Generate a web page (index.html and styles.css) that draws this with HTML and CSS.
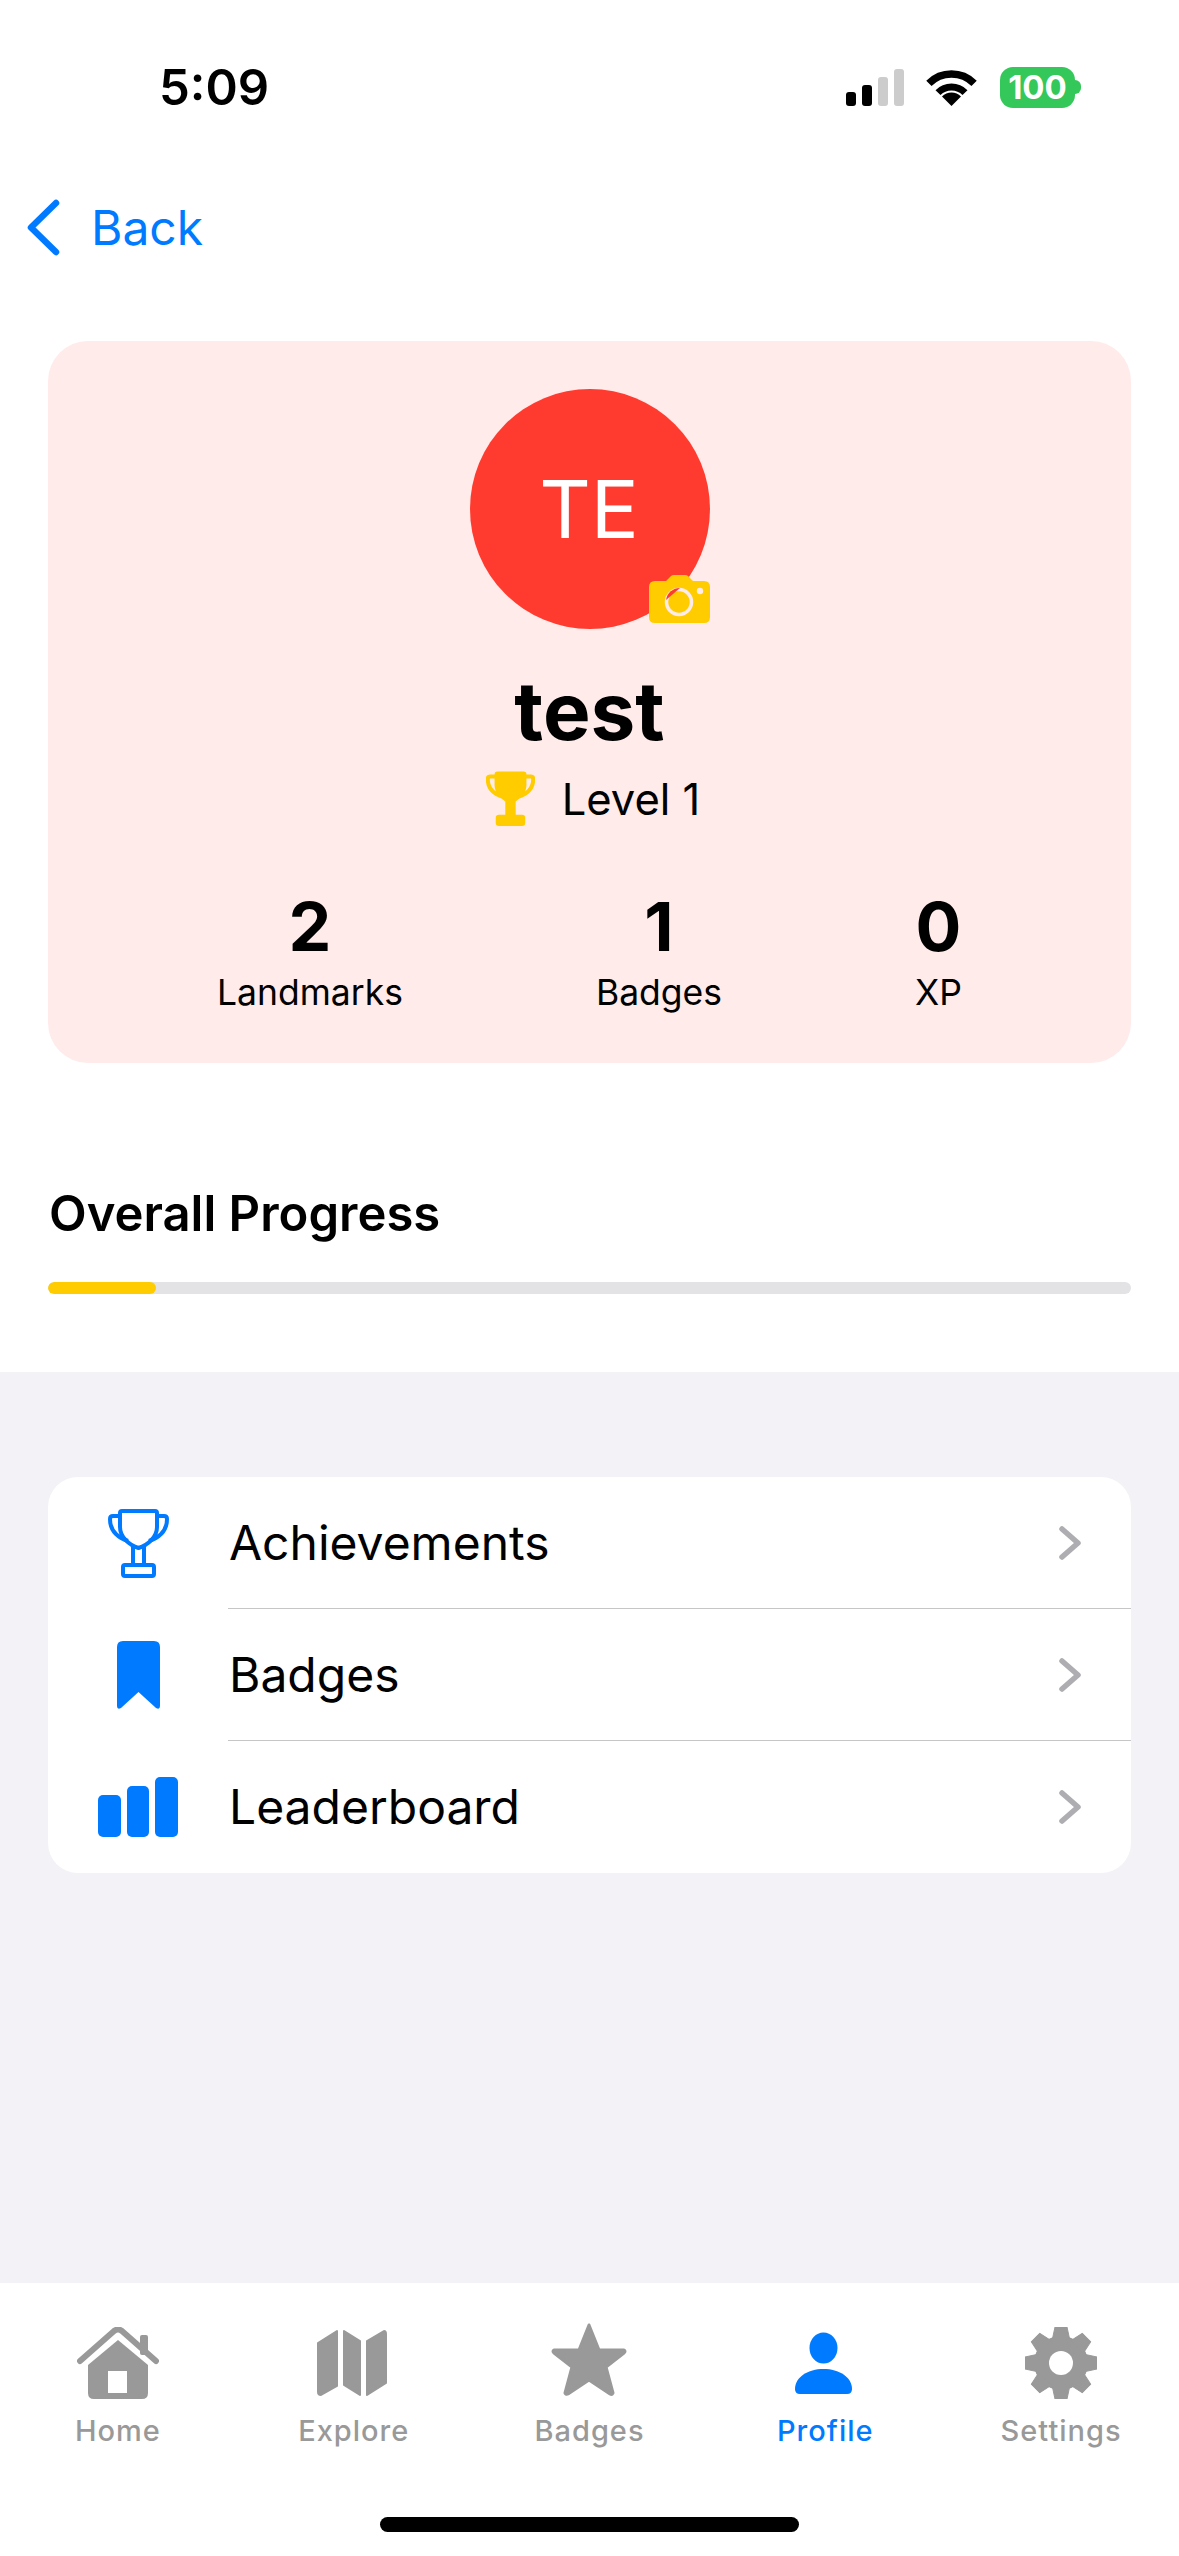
FILE: index.html
```html
<!DOCTYPE html>
<html lang="en">
<head>
  <meta charset="UTF-8" />
  <meta name="viewport" content="width=device-width, initial-scale=1" />
  <title>Profile</title>
  <link rel="stylesheet" href="styles.css">
</head>
<body>

<div class="phone">
  <header class="status-bar">
    <span class="time">5:09</span>
    <div class="status-icons">
      <svg class="signal" width="58" height="37" viewBox="0 0 58 37">
        <rect x="0" y="23" width="10" height="14" rx="3" fill="#000"/>
        <rect x="16" y="16" width="10" height="21" rx="3" fill="#000"/>
        <rect x="32" y="8" width="10" height="29" rx="3" fill="#ccc"/>
        <rect x="48" y="0" width="10" height="37" rx="3" fill="#ccc"/>
      </svg>
      <svg class="wifi" width="51" height="37" viewBox="0 0 51 37">
        <path d="M2.9 14.4A32 32 0 0 1 48.1 14.4" fill="none" stroke="#000" stroke-width="7.5"/>
        <path d="M12 23.6A19 19 0 0 1 39 23.6" fill="none" stroke="#000" stroke-width="7"/>
        <path d="M25.5 37L16 27.5A13.4 13.4 0 0 1 35 27.5Z" fill="#000"/>
      </svg>
      <div class="battery">
        <span class="battery-body">100</span>
        <span class="battery-nub"></span>
      </div>
    </div>
  </header>

  <nav class="nav-bar">
    <svg width="33" height="57" viewBox="0 0 33 57">
      <polyline points="29,4 4,28.5 29,53" fill="none" stroke="#007aff" stroke-width="6.5" stroke-linecap="round" stroke-linejoin="round"/>
    </svg>
    <span class="back-label">Back</span>
  </nav>

  <section class="profile-card">
    <div class="avatar">
      <span class="initials">TE</span>
      <svg class="camera" width="61" height="48" viewBox="0 0 61 48">
        <path d="M6 6H17L22 1Q23 0 25 0H36Q38 0 39 1L44 6H55Q61 6 61 12V42Q61 48 55 48H6Q0 48 0 42V12Q0 6 6 6Z" fill="#ffcc00"/>
        <circle cx="30" cy="27" r="12.5" fill="none" stroke="#ffebea" stroke-width="3.5"/>
        <path d="M17 25A14 14 0 0 1 31 13Z" fill="#ff3b30"/>
        <circle cx="51" cy="16" r="3.200" fill="#ffebea"/>
      </svg>
    </div>
    <h1 class="name">test</h1>
    <div class="level">
      <svg width="49" height="55" viewBox="0 0 61 69">
        <path d="M14 2H47Q49 2 49 4V18C49 28 40 36 30.500 39C21 36 12 28 12 18V4Q12 2 14 2Z" fill="#ffcc00" stroke="#ffcc00" stroke-width="3"/>
        <path d="M12 7H5Q2 7 2 10C2 20 8 28 20 32M49 7H56Q59 7 59 10C59 20 53 28 41 32" fill="none" stroke="#ffcc00" stroke-width="5"/>
        <rect x="24" y="36" width="13" height="22" fill="#ffcc00"/>
        <rect x="12" y="55" width="37" height="14" rx="4" fill="#ffcc00"/>
      </svg>
      <span class="level-label">Level 1</span>
    </div>
    <div class="stats">
      <div class="stat"><span class="stat-value">2</span><span class="stat-label">Landmarks</span></div>
      <div class="stat"><span class="stat-value">1</span><span class="stat-label">Badges</span></div>
      <div class="stat"><span class="stat-value">0</span><span class="stat-label">XP</span></div>
    </div>
  </section>

  <section class="progress">
    <h2 class="progress-title">Overall Progress</h2>
    <div class="progress-track"><div class="progress-fill" style="width:10%"></div></div>
  </section>

  <main class="content">
    <ul class="menu">
      <li class="menu-row">
        <span class="menu-icon">
          <svg width="61" height="69" viewBox="0 0 61 69">
            <g fill="none" stroke="#007aff" stroke-width="4">
              <path d="M14 2H47Q49 2 49 4V18C49 28 40 36 30.500 39C21 36 12 28 12 18V4Q12 2 14 2Z"/>
              <path d="M12 7H5Q2 7 2 10C2 20 8 28 20 32M49 7H56Q59 7 59 10C59 20 53 28 41 32"/>
              <path d="M25 38V56M36 38V56"/>
              <rect x="15" y="56" width="31" height="11" rx="2"/>
            </g>
          </svg>
        </span>
        <span class="menu-label">Achievements</span>
        <svg class="menu-arrow" width="25" height="34" viewBox="0 0 25 34"><polyline points="4,3 20,17 4,31" fill="none" stroke="#aeaeb2" stroke-width="5.500" stroke-linecap="round" stroke-linejoin="round"/></svg>
      </li>
      <li class="menu-row">
        <span class="menu-icon">
          <svg width="43" height="68" viewBox="0 0 43 68">
            <path d="M6 0H37Q43 0 43 6V65Q43 69 39 67L21.500 51L4 67Q0 69 0 65V6Q0 0 6 0Z" fill="#007aff"/>
          </svg>
        </span>
        <span class="menu-label">Badges</span>
        <svg class="menu-arrow" width="25" height="34" viewBox="0 0 25 34"><polyline points="4,3 20,17 4,31" fill="none" stroke="#aeaeb2" stroke-width="5.500" stroke-linecap="round" stroke-linejoin="round"/></svg>
      </li>
      <li class="menu-row">
        <span class="menu-icon">
          <svg width="80" height="60" viewBox="0 0 80 60">
            <rect x="0" y="18" width="23" height="42" rx="5" fill="#007aff"/>
            <rect x="29" y="9" width="22" height="51" rx="5" fill="#007aff"/>
            <rect x="57" y="0" width="23" height="60" rx="5" fill="#007aff"/>
          </svg>
        </span>
        <span class="menu-label">Leaderboard</span>
        <svg class="menu-arrow" width="25" height="34" viewBox="0 0 25 34"><polyline points="4,3 20,17 4,31" fill="none" stroke="#aeaeb2" stroke-width="5.500" stroke-linecap="round" stroke-linejoin="round"/></svg>
      </li>
    </ul>
  </main>

  <footer class="tab-bar">
    <div class="tabs">
      <div class="tab">
        <svg width="82" height="72" viewBox="0 0 82 72">
          <path d="M3 34L37 4Q41 1 45 4L79 34" fill="none" stroke="#999" stroke-width="6" stroke-linecap="round"/>
          <rect x="63" y="8" width="8" height="20" rx="2" fill="#999"/>
          <path d="M41 13L71 38V66Q71 72 65 72H17Q11 72 11 66V38Z" fill="#999"/>
          <rect x="31" y="44" width="19" height="22" fill="#fff"/>
        </svg>
        <span class="tab-label">Home</span>
      </div>
      <div class="tab">
        <svg class="tab-map" width="70" height="72" viewBox="0 -3 70 72">
          <g fill="#999" stroke="#999" stroke-width="2" stroke-linejoin="round">
            <path d="M1 13L20 1V56L4 65Q1 65 1 62Z"/>
            <path d="M27 1L43 11V65L27 55Z"/>
            <path d="M50 11L67 1Q69 1 69 4V53L50 65Z"/>
          </g>
        </svg>
        <span class="tab-label">Explore</span>
      </div>
      <div class="tab">
        <svg width="78" height="74" viewBox="0 0 78 74" class="tab-star">
          <path d="M39 2L49 27H74Q76 28 74 30L56 44L63 70Q62 72 60 71L39 57L18 71Q16 72 15 70L22 44L4 30Q2 28 4 27H29Z" fill="#999" stroke="#999" stroke-width="3" stroke-linejoin="round"/>
        </svg>
        <span class="tab-label">Badges</span>
      </div>
      <div class="tab tab-active">
        <svg class="tab-person" width="57" height="72" viewBox="0 -6 57 72">
          <ellipse cx="28.500" cy="15" rx="14" ry="15.500" fill="#007aff"/>
          <path d="M5 61H52Q57 61 57 56C57 44 44 36 28.500 36C13 36 0 44 0 56Q0 61 5 61Z" fill="#007aff"/>
        </svg>
        <span class="tab-label">Profile</span>
      </div>
      <div class="tab">
        <svg width="72" height="72" viewBox="0 0 72 72">
          <g fill="#999">
            <circle cx="36" cy="36" r="27"/>
            <path id="tooth" d="M30 0H42L45 14H27Z" stroke="#999" stroke-width="1" stroke-linejoin="round"/>
            <use href="#tooth" transform="rotate(45 36 36)"/>
            <use href="#tooth" transform="rotate(90 36 36)"/>
            <use href="#tooth" transform="rotate(135 36 36)"/>
            <use href="#tooth" transform="rotate(180 36 36)"/>
            <use href="#tooth" transform="rotate(225 36 36)"/>
            <use href="#tooth" transform="rotate(270 36 36)"/>
            <use href="#tooth" transform="rotate(315 36 36)"/>
          </g>
          <circle cx="36" cy="36" r="12" fill="#fff"/>
        </svg>
        <span class="tab-label">Settings</span>
      </div>
    </div>
    <div class="home-indicator"></div>
  </footer>
</div>

</body>
</html>
```

FILE: styles.css
```css
* {
  box-sizing: border-box;
}
body {
  margin: 0;
  background: #fff;
  font-family: Inter, "Liberation Sans", sans-serif;
  color: #000;
}
.phone {
  width: 1179px;
  height: 2556px;
  display: flex;
  flex-direction: column;
  overflow: hidden;
}

/* status bar */
.status-bar {
  height: 174px;
  flex: none;
  display: flex;
  justify-content: space-between;
  align-items: center;
  padding: 0 98px 0 159px;
}
.time {
  font-size: 49px;
  font-weight: 600;
  line-height: 1;
}
.status-icons {
  display: flex;
  align-items: center;
}
.wifi {
  margin-left: 22px;
}
.battery {
  display: flex;
  align-items: center;
  margin-left: 23px;
}
.battery-body {
  width: 75px;
  height: 41px;
  border-radius: 13px;
  background: #34c759;
  color: #fff;
  font-size: 33px;
  font-weight: 700;
  line-height: 41px;
  text-align: center;
}
.battery-nub {
  width: 6px;
  height: 14px;
  background: #34c759;
  border-radius: 0 7px 7px 0;
}

/* nav */
.nav-bar {
  height: 106px;
  flex: none;
  display: flex;
  align-items: center;
  padding-left: 27px;
}
.back-label {
  margin-left: 31px;
  font-size: 48px;
  color: #007aff;
}

/* profile card */
.profile-card {
  flex: none;
  height: 722px;
  margin: 61px 48px 0;
  padding-top: 48px;
  background: #ffebea;
  border-radius: 40px;
  display: flex;
  flex-direction: column;
  align-items: center;
}
.avatar {
  position: relative;
  width: 240px;
  height: 240px;
  border-radius: 50%;
  background: #ff3b30;
  display: flex;
  align-items: center;
  justify-content: center;
}
.initials {
  font-size: 80px;
  color: #fff;
  margin: -2px 1px 0 0;
}
.camera {
  position: absolute;
  left: 179px;
  top: 186px;
}
.name {
  margin: 37px 0 0;
  font-size: 80px;
  font-weight: 700;
  line-height: 90px;
}
.level {
  display: flex;
  align-items: center;
  margin-top: 15px;
  margin-left: 7px;
}
.level-label {
  margin-left: 27px;
  font-size: 43.500px;
}
.stats {
  display: flex;
  justify-content: center;
  gap: 193px;
  margin-top: 62px;
}
.stat {
  display: flex;
  flex-direction: column;
  align-items: center;
}
.stat-value {
  font-size: 68px;
  font-weight: 700;
  line-height: 76px;
}
.stat-label {
  font-size: 35.500px;
  line-height: 48px;
  margin-top: 5px;
}

/* progress */
.progress {
  flex: none;
  height: 309px;
  padding: 121px 48px 0;
}
.progress-title {
  margin: 0;
  font-size: 49px;
  font-weight: 600;
  line-height: 60px;
  padding-left: 1px;
}
.progress-track {
  height: 12px;
  margin-top: 38px;
  background: #e3e3e5;
  border-radius: 6px;
  overflow: hidden;
}
.progress-fill {
  height: 100%;
  background: #ffcc00;
  border-radius: 6px;
}

/* menu */
.content {
  flex: 1;
  background: #f2f2f7;
  padding: 105px 48px 0;
}
.menu {
  list-style: none;
  margin: 0;
  padding: 0;
  background: #fff;
  border-radius: 30px;
}
.menu-row {
  position: relative;
  height: 132px;
  display: flex;
  align-items: center;
  padding-right: 48px;
}
.menu-row + .menu-row::before {
  content: "";
  position: absolute;
  left: 180px;
  right: 0;
  top: -1px;
  height: 1px;
  background: #c6c6c8;
}
.menu-icon {
  width: 180px;
  flex: none;
  display: flex;
  justify-content: center;
}
.menu-label {
  flex: 1;
  font-size: 48px;
  margin-left: 1px;
  margin-top: -1px;
}

/* tab bar */
.tab-bar {
  flex: none;
  height: 273px;
  background: #fff;
  display: flex;
  flex-direction: column;
  padding-top: 44px;
}
.tabs {
  display: grid;
  grid-template-columns: repeat(5, 1fr);
}
.tab {
  display: flex;
  flex-direction: column;
  align-items: center;
  color: #999;
}
.tab-map {
  margin-right: 3px;
}
.tab-person {
  margin-right: 3px;
}
.tab-star {
  margin-top: -4px;
  margin-bottom: 2px;
}
.tab-active {
  color: #007aff;
}
.tab-label {
  margin-top: 14px;
  font-size: 29px;
  font-weight: 500;
  line-height: 36px;
  letter-spacing: 1px;
}
.home-indicator {
  width: 419px;
  height: 15px;
  margin: auto auto 24px;
  background: #000;
  border-radius: 8px;
}
```
